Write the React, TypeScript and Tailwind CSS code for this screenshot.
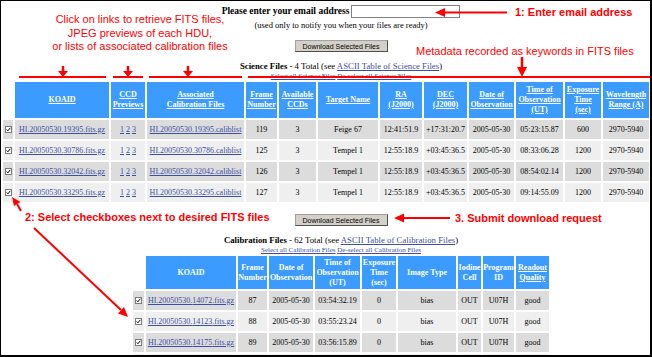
import React from 'react';

type SciRow = { id: string; frame: string; target: string; ra: string; dec: string; time: string; exp: string };
type CalRow = { id: string; frame: string; time: string };

const sciRows: SciRow[] = [
  { id: '19395', frame: '119', target: 'Feige 67', ra: '12:41:51.9', dec: '+17:31:20.7', time: '05:23:15.87', exp: '600' },
  { id: '30786', frame: '125', target: 'Tempel 1', ra: '12:55:18.9', dec: '+03:45:36.5', time: '08:33:06.28', exp: '1200' },
  { id: '32042', frame: '126', target: 'Tempel 1', ra: '12:55:18.9', dec: '+03:45:36.5', time: '08:54:02.14', exp: '1200' },
  { id: '33295', frame: '127', target: 'Tempel 1', ra: '12:55:18.9', dec: '+03:45:36.5', time: '09:14:55.09', exp: '1200' },
];

const calRows: CalRow[] = [
  { id: '14072', frame: '87', time: '03:54:32.19' },
  { id: '14123', frame: '88', time: '03:55:23.24' },
  { id: '14175', frame: '89', time: '03:56:15.89' },
];

const link = 'text-[#3c4fa3] underline';

function Check() {
  return (
    <span className="inline-flex h-[7px] w-[7px] items-center justify-center border border-[#7a7a7a] bg-white align-middle">
      <svg viewBox="0 0 7 7" className="h-[5px] w-[5px]">
        <path d="M1 3.4 L2.7 5.3 L6 1.2" fill="none" stroke="#000" strokeWidth="1.4" />
      </svg>
    </span>
  );
}

function DlButton() {
  return (
    <button
      type="button"
      className="mx-auto flex h-[12px] w-[93px] items-center justify-center border border-[#a0a0a0] border-b-[#505050] border-r-[#505050] bg-[#d4d0c8] font-['Liberation_Sans',sans-serif] text-[7px] leading-none text-black"
    >
      Download Selected Files
    </button>
  );
}

function Annotations() {
  return (
    <>
      <div className="absolute left-[20px] top-[12px] w-[238px] text-center font-['Liberation_Sans',sans-serif] text-[11px] leading-[13.5px] text-[#f00]">
        Click on links to retrieve FITS files,
        <br />
        JPEG previews of each HDU,
        <br />
        or lists of associated calibration files
      </div>
      <div className="absolute left-[514px] top-[5px] whitespace-nowrap font-['Liberation_Sans',sans-serif] text-[11px] font-bold leading-[13px] text-[#f00]">
        1: Enter email address
      </div>
      <div className="absolute left-[415px] top-[44px] whitespace-nowrap font-['Liberation_Sans',sans-serif] text-[11px] leading-[13px] text-[#f00]">
        Metadata recorded as keywords in FITS files
      </div>
      <div className="absolute left-[24px] top-[210px] whitespace-nowrap font-['Liberation_Sans',sans-serif] text-[11px] font-bold leading-[13px] text-[#f00]">
        2: Select checkboxes next to desired FITS files
      </div>
      <div className="absolute left-[454px] top-[211px] whitespace-nowrap font-['Liberation_Sans',sans-serif] text-[11px] font-bold leading-[13px] text-[#f00]">
        3. Submit download request
      </div>
      <svg className="pointer-events-none absolute left-[-1px] top-[-1px] h-[357px] w-[652px]" viewBox="0 0 652 357">
        <g fill="#f00" stroke="#f00">
          <line x1="19" y1="77" x2="106" y2="77" strokeWidth="2" />
          <line x1="113" y1="77" x2="143" y2="77" strokeWidth="2" />
          <line x1="149" y1="77" x2="242" y2="77" strokeWidth="2" />
          <line x1="248" y1="77" x2="651" y2="77" strokeWidth="2" />
          <line x1="63" y1="66" x2="63" y2="72" strokeWidth="2.5" />
          <polygon points="58,71 68,71 63,77" strokeWidth="0" />
          <line x1="128" y1="66" x2="128" y2="72" strokeWidth="2.5" />
          <polygon points="123,71 133,71 128,77" strokeWidth="0" />
          <line x1="188" y1="66" x2="188" y2="72" strokeWidth="2.5" />
          <polygon points="183,71 193,71 188,77" strokeWidth="0" />
          <line x1="522" y1="57" x2="522" y2="68" strokeWidth="2.5" />
          <polygon points="517,67 527,67 522,77" strokeWidth="0" />
          <line x1="444" y1="12.5" x2="507" y2="12.5" strokeWidth="2" />
          <polygon points="435,12.5 445,8 445,17" strokeWidth="0" />
          <line x1="403" y1="218" x2="450" y2="218" strokeWidth="2" />
          <polygon points="394,218 404,213.5 404,222.5" strokeWidth="0" />
          <line x1="21" y1="211" x2="17" y2="204" strokeWidth="2" />
          <polygon points="12,197 20.5,202 14,206" strokeWidth="0" />
          <line x1="34" y1="228" x2="121" y2="310" strokeWidth="2" />
          <polygon points="128,317 118,313.5 124,307" strokeWidth="0" />
        </g>
      </svg>
    </>
  );
}

function ScienceTable() {
  const widths = ['w-[10px]', 'w-[94px]', 'w-[34px]', 'w-[97px]', 'w-[31px]', 'w-[37px]', 'w-[60px]', 'w-[42px]', 'w-[43px]', 'w-[45px]', 'w-[47px]', 'w-[36px]', 'w-[46px]'];
  const heads = [
    ['KOAID'],
    ['CCD', 'Previews'],
    ['Associated', 'Calibration Files'],
    ['Frame', 'Number'],
    ['Available', 'CCDs'],
    ['Target Name'],
    ['RA', '(J2000)'],
    ['DEC', '(J2000)'],
    ['Date of', 'Observation'],
    ['Time of', 'Observation', '(UT)'],
    ['Exposure', 'Time', '(sec)'],
    ['Wavelength', 'Range (A)'],
  ];
  return (
    <table className="w-[650px] table-fixed border-separate border-spacing-[2px] text-[8px] leading-[10px]">
      <colgroup>
        {widths.map((w, i) => (
          <col key={i} className={w} />
        ))}
      </colgroup>
      <thead>
        <tr>
          <th className="p-0" />
          {heads.map((h, i) => (
            <th key={i} className="h-[36px] bg-[#3b9bff] p-0 text-center align-middle font-bold whitespace-nowrap text-white underline">
              {h.map((line, j) => (
                <div key={j}>{line}</div>
              ))}
            </th>
          ))}
        </tr>
      </thead>
      <tbody>
        {sciRows.map((r, i) => {
          const bg = i % 2 === 0 ? 'bg-[#dcdcdc]' : 'bg-[#efefef]';
          const cell = `h-[19px] p-0 text-center align-middle whitespace-nowrap ${bg}`;
          return (
            <tr key={r.id}>
              <td className={cell}>
                <Check />
              </td>
              <td className={cell}>
                <a className={link}>HI.20050530.{r.id}.fits.gz</a>
              </td>
              <td className={cell}>
                <a className={link}>1</a> <a className={link}>2</a> <a className={link}>3</a>
              </td>
              <td className={cell}>
                <a className={link}>HI.20050530.{r.id}.caliblist</a>
              </td>
              <td className={cell}>{r.frame}</td>
              <td className={cell}>3</td>
              <td className={cell}>{r.target}</td>
              <td className={cell}>{r.ra}</td>
              <td className={cell}>{r.dec}</td>
              <td className={cell}>2005-05-30</td>
              <td className={cell}>{r.time}</td>
              <td className={cell}>{r.exp}</td>
              <td className={cell}>2970-5940</td>
            </tr>
          );
        })}
      </tbody>
    </table>
  );
}

function CalTable() {
  const widths = ['w-[11px]', 'w-[90px]', 'w-[29px]', 'w-[44px]', 'w-[45px]', 'w-[34px]', 'w-[58px]', 'w-[23px]', 'w-[31px]', 'w-[33px]'];
  const heads = [
    ['KOAID'],
    ['Frame', 'Number'],
    ['Date of', 'Observation'],
    ['Time of', 'Observation', '(UT)'],
    ['Exposure', 'Time', '(sec)'],
    ['Image Type'],
    ['Iodine', 'Cell'],
    ['Program', 'ID'],
  ];
  return (
    <table className="mx-auto w-[420px] table-fixed border-separate border-spacing-[2px] text-[8px] leading-[10px]">
      <colgroup>
        {widths.map((w, i) => (
          <col key={i} className={w} />
        ))}
      </colgroup>
      <thead>
        <tr>
          <th className="p-0" />
          {heads.map((h, i) => (
            <th key={i} className="h-[33px] bg-[#3b9bff] p-0 text-center align-middle font-bold whitespace-nowrap text-white">
              {h.map((line, j) => (
                <div key={j}>{line}</div>
              ))}
            </th>
          ))}
          <th className="h-[33px] bg-[#3b9bff] p-0 text-center align-middle font-bold whitespace-nowrap text-white underline">
            <div>Readout</div>
            <div>Quality</div>
          </th>
        </tr>
      </thead>
      <tbody>
        {calRows.map((r, i) => {
          const bg = i % 2 === 0 ? 'bg-[#dcdcdc]' : 'bg-[#efefef]';
          const cell = `h-[19px] p-0 text-center align-middle whitespace-nowrap ${bg}`;
          return (
            <tr key={r.id}>
              <td className={cell}>
                <Check />
              </td>
              <td className={cell}>
                <a className={link}>HI.20050530.{r.id}.fits.gz</a>
              </td>
              <td className={cell}>{r.frame}</td>
              <td className={cell}>2005-05-30</td>
              <td className={cell}>{r.time}</td>
              <td className={cell}>0</td>
              <td className={cell}>bias</td>
              <td className={cell}>OUT</td>
              <td className={cell}>U07H</td>
              <td className={cell}>good</td>
            </tr>
          );
        })}
        <tr>
          {Array.from({ length: 10 }).map((_, i) => (
            <td key={i} className="h-[19px] bg-[#efefef] p-0" />
          ))}
        </tr>
      </tbody>
    </table>
  );
}

export default function App() {
  return (
    <div className="relative h-[357px] w-[652px] overflow-hidden border-b-2 border-l border-r-2 border-t border-black bg-white font-['Liberation_Serif',serif] text-black">
      <div className="w-[680px]">
        <div className="mt-[4px] flex h-[13px] items-center justify-center">
          <span className="text-[9.5px] font-bold leading-none">Please enter your email address</span>
          <input type="text" className="ml-[2px] h-[13px] w-[109px] border border-[#808080] bg-white" />
        </div>
        <div className="mt-[2px] text-center text-[8.5px] leading-[10px]">(used only to notify you when your files are ready)</div>
        <div className="mt-[10px]">
          <DlButton />
        </div>
        <div className="mt-[8px] text-center text-[8.75px] leading-[12px]">
          <b>Science Files</b> - 4 Total (see <a className={link}>ASCII Table of Science Files</a>)
        </div>
        <div className="text-center text-[7px] leading-[8px]">
          <a className={link}>Select all Science Files</a> <a className={link}>De-select all Science Files</a>
        </div>
        <ScienceTable />
        <div className="mt-[10px]">
          <DlButton />
        </div>
        <div className="mt-[8px] text-center text-[8.75px] leading-[12px]">
          <b>Calibration Files</b> - 62 Total (see <a className={link}>ASCII Table of Calibration Files</a>)
        </div>
        <div className="text-center text-[7px] leading-[8px]">
          <a className={link}>Select all Calibration Files</a> <a className={link}>De-select all Calibration Files</a>
        </div>
        <CalTable />
      </div>
      <Annotations />
    </div>
  );
}
